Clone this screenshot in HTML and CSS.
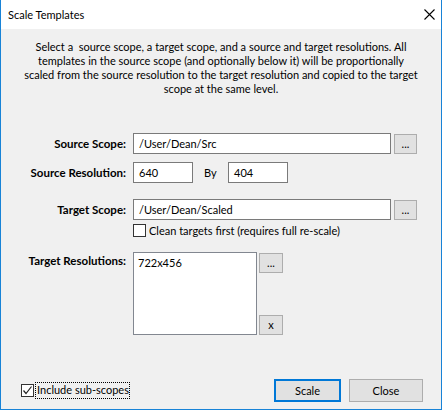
FILE: index.html
```html
<!DOCTYPE html>
<html>
<head>
<meta charset="utf-8">
<link rel="stylesheet" href="styles.css">
</head>
<body>
<div class="window">
  <div class="titlebar">
    <span class="title">Scale Templates</span>
    <svg class="close-x" width="11" height="11" viewBox="0 0 11 11"><path d="M0.5 0.5 L10.5 10.5 M10.5 0.5 L0.5 10.5" stroke="#000" stroke-width="1.1" fill="none"/></svg>
  </div>
  <div class="content">
    <p class="intro">Select a&nbsp; source scope, a target scope, and a source and target resolutions. All<br>templates in the source scope (and optionally below it) will be proportionally<br>scaled from the source resolution to the target resolution and copied to the target<br>scope at the same level.</p>

    <div class="row row-src">
      <label class="lbl">Source Scope:</label>
      <div class="field wide">/User/Dean/Src</div>
      <button class="btn small">...</button>
    </div>

    <div class="row row-res">
      <label class="lbl">Source Resolution:</label>
      <div class="field num">640</div>
      <span class="by">By</span>
      <div class="field num">404</div>
    </div>

    <div class="row row-tgt">
      <label class="lbl">Target Scope:</label>
      <div class="field wide">/User/Dean/Scaled</div>
      <button class="btn small">...</button>
    </div>

    <div class="row row-clean">
      <span class="lbl"></span>
      <span class="check"></span>
      <span class="check-text">Clean targets first (requires full re-scale)</span>
    </div>

    <div class="row row-list">
      <label class="lbl lbl-top">Target Resolutions:</label>
      <div class="listbox">722x456</div>
      <div class="list-btns">
        <button class="btn tiny">...</button>
        <button class="btn tiny">x</button>
      </div>
    </div>

    <div class="footer">
      <div class="sub">
        <span class="check checked"><svg width="11" height="11" viewBox="0 0 11 11"><path d="M1.5 5.5 L4 8.5 L9.5 1.5" stroke="#222" stroke-width="1.2" fill="none"/></svg></span>
        <span class="focus">Include sub-scopes</span>
      </div>
      <div class="actions">
        <button class="btn big default">Scale</button>
        <button class="btn big close">Close</button>
      </div>
    </div>
  </div>
</div>
</body>
</html>
```
FILE: styles.css
```css
* { box-sizing: border-box; }
html, body { margin: 0; padding: 0; }
body {
  width: 443px;
  height: 411px;
  font-family: Lato, "Noto Sans", sans-serif;
  font-size: 11px;
  color: #000;
  background: #fff;
}
.window {
  width: 442px;
  height: 410px;
  border: 1px solid #1883d7;
  border-top: none;
  display: flex;
  flex-direction: column;
  background: #f0f0f0;
}
.titlebar {
  height: 29px;
  background: #fff;
  display: flex;
  align-items: center;
  justify-content: space-between;
  padding: 0 6px 0 7px;
  flex: none;
}
.title { font-size: 11px; }
.content {
  flex: 1;
  display: flex;
  flex-direction: column;
}
.intro {
  margin: 11px 0 0 0;
  text-align: center;
  line-height: 14px;
  white-space: nowrap;
}
.row {
  display: flex;
  align-items: center;
}
.lbl {
  width: 125px;
  flex: none;
  text-align: right;
  font-weight: bold;
  font-size: 11.5px;
  margin-right: 7px;
}
.row-src { margin-top: 37px; }
.row-res { margin-top: 8px; }
.row-tgt { margin-top: 16px; }
.row-clean { margin-top: 4px; }
.row-list { margin-top: 15px; align-items: flex-start; }
.lbl-top { padding-top: 2px; }
.field {
  height: 21px;
  background: #fff;
  border: 1px solid #7a7a7a;
  padding-left: 5px;
  line-height: 19px;
}
.field.wide { width: 258px; }
.field.num { width: 60px; }
.by { width: 35px; padding-left: 11px; flex: none; }
.btn {
  font-family: inherit;
  font-size: 11px;
  background: #e1e1e1;
  border: 1px solid #adadad;
  padding: 0;
  color: #000;
}
.btn.small {
  width: 23px;
  height: 20px;
  margin-left: 3px;
  line-height: 14px;
}
.check {
  width: 13px;
  height: 13px;
  border: 1px solid #333;
  background: #fff;
  flex: none;
  display: flex;
  align-items: center;
  justify-content: center;
}
.check-text { margin-left: 3px; }
.listbox {
  width: 124px;
  height: 83px;
  background: #fff;
  border: 1px solid #828790;
  padding: 2px 0 0 4px;
  line-height: 16px;
}
.list-btns {
  display: flex;
  flex-direction: column;
  justify-content: space-between;
  height: 83px;
  margin-left: 2px;
  padding-top: 1px;
}
.btn.tiny {
  width: 24px;
  height: 20px;
  line-height: 14px;
}
.footer {
  margin-top: auto;
  margin-bottom: 7px;
  display: flex;
  align-items: center;
  justify-content: space-between;
  padding: 0 18px 0 20px;
}
.sub { display: flex; align-items: center; }
.focus {
  border: 1px dotted #000;
  padding: 0 0 1px 1px;
  margin-left: 1px;
  line-height: 14px;
}
.actions { display: flex; gap: 8px; }
.btn.big { height: 23px; }
.btn.default {
  width: 67px;
  border: 2px solid #0078d7;
}
.btn.close { width: 74px; }
```
